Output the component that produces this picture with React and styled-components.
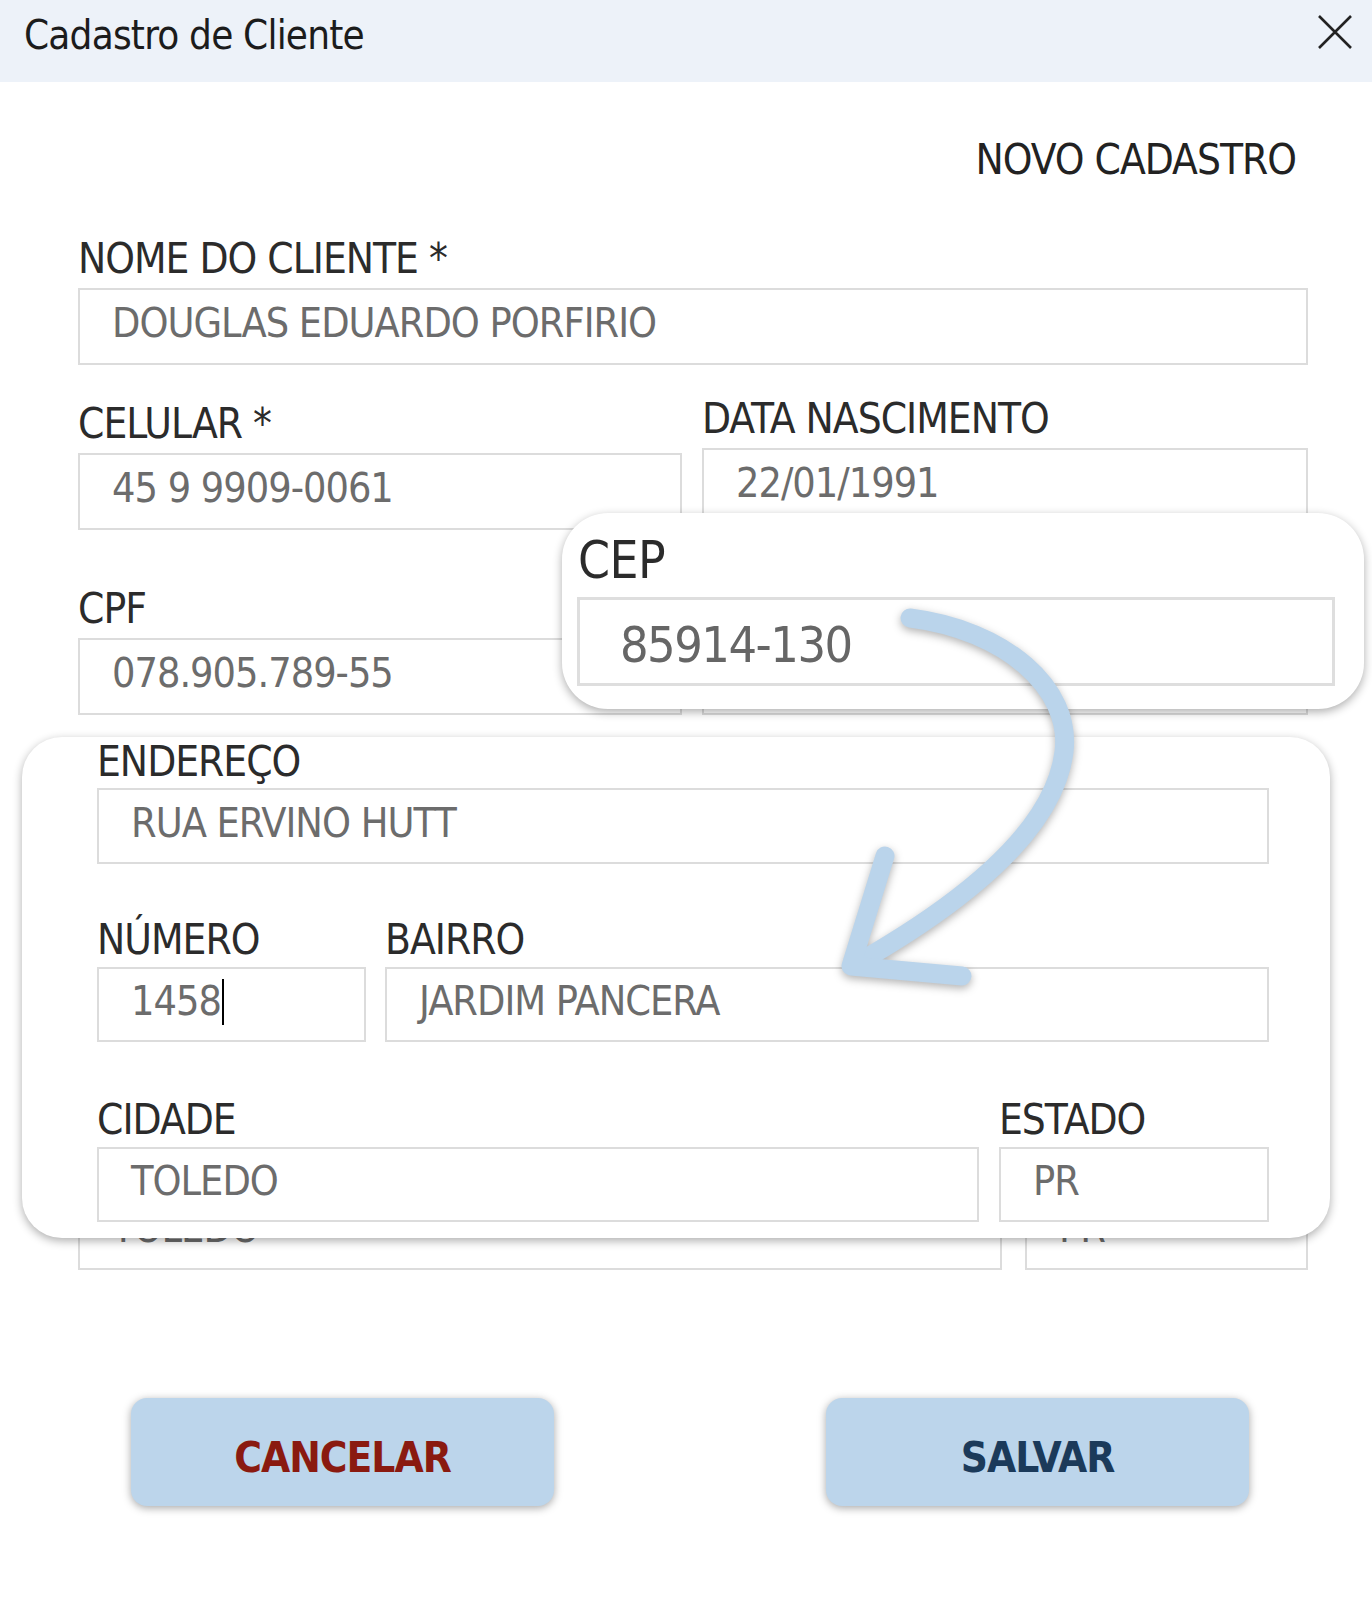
import React from "react";
import styled, { createGlobalStyle } from "styled-components";

const NARROW = `"DejaVu Sans Condensed", "DejaVu Sans", sans-serif`;

const Global = createGlobalStyle`
  html, body { margin: 0; padding: 0; background: #ffffff; }
  body { font-family: ${NARROW}; }
  * { box-sizing: border-box; }
`;

const Window = styled.div`
  position: relative;
  width: 1372px;
  height: 1601px;
  overflow: hidden;
  background: #ffffff;
`;

const TitleBar = styled.header`
  display: flex;
  justify-content: space-between;
  align-items: flex-start;
  height: 82px;
  padding: 15px 19px 0 24px;
  background: #edf2f9;
`;

const Title = styled.h1`
  margin: 0;
  font-weight: 400;
  font-size: 40px;
  letter-spacing: -0.8px;
  line-height: 1;
  color: #1c1c1c;
`;

const CloseIcon = styled.svg`
  margin-top: 0;
  width: 36px;
  height: 34px;
`;

const Body = styled.main`
  padding: 0 64px 0 78px;
`;

const Mode = styled.div`
  margin-top: 56px;
  padding-right: 12px;
  text-align: right;
  font-size: 42px;
  letter-spacing: -1px;
  line-height: 44px;
  height: 44px;
  color: #222;
`;

const Row = styled.div`
  display: grid;
  grid-template-columns: ${(p) => p.$cols || "1fr"};
  column-gap: ${(p) => p.$gap ?? 20}px;
  margin-top: ${(p) => p.$top ?? 0}px;
  align-items: start;
`;

const Field = styled.div`
  display: flex;
  flex-direction: column;
  gap: ${(p) => p.$gap ?? 8}px;
  margin-top: ${(p) => p.$shift ?? 0}px;
`;

const Label = styled.label`
  display: block;
  height: 45px;
  font-size: 42px;
  letter-spacing: -1px;
  line-height: 47px;
  color: #2b2b2b;
  white-space: nowrap;
  visibility: ${(p) => (p.$covered ? "hidden" : "visible")};
`;

const Input = styled.div`
  display: flex;
  align-items: center;
  height: ${(p) => p.$h ?? 77}px;
  padding: 0 0 6px 32px;
  border: 2px solid #dcdcdc;
  background: #fff;
  font-size: 41px;
  letter-spacing: -1px;
  line-height: 1;
  color: #6c6c6c;
  white-space: nowrap;
  overflow: hidden;
`;

const Value = styled.span`
  visibility: ${(p) => (p.$covered ? "hidden" : "visible")};
`;

const Caret = styled.span`
  display: inline-block;
  width: 2px;
  height: 46px;
  margin-left: 1px;
  background: #000;
`;

const Buttons = styled.div`
  display: flex;
  justify-content: space-between;
  margin-top: 128px;
  padding: 0 59px 0 53px;
`;

const Button = styled.button`
  width: 423px;
  height: 108px;
  border: none;
  border-radius: 16px;
  background: #bcd5eb;
  box-shadow: 0 2px 8px rgba(0, 0, 0, 0.35);
  font-family: ${NARROW};
  font-weight: 700;
  font-size: 42px;
  letter-spacing: -1px;
  color: ${(p) => p.$color};
  padding: 10px 0 0;
`;

const CepCard = styled.section`
  position: absolute;
  left: 562px;
  top: 513px;
  width: 802px;
  height: 196px;
  padding: 21px 29px 0 15px;
  background: #fff;
  border-radius: 46px;
  box-shadow: 0 3px 10px rgba(0, 0, 0, 0.32);
`;

const BigLabel = styled.div`
  height: 52px;
  margin: 0 0 11px 1px;
  font-size: 51px;
  letter-spacing: -0.5px;
  line-height: 54px;
  color: #2b2b2b;
`;

const BigInput = styled.div`
  display: flex;
  align-items: center;
  height: 89px;
  padding: 7px 0 0 40px;
  border: 3px solid #dedede;
  font-size: 50px;
  letter-spacing: -1.5px;
  color: #666;
`;

const AddressCard = styled.section`
  position: absolute;
  left: 22px;
  top: 737px;
  width: 1308px;
  height: 501px;
  padding: 1px 61px 16px 75px;
  background: #fff;
  border-radius: 40px;
  box-shadow: 0 3px 10px rgba(0, 0, 0, 0.32);
`;

const ArrowLayer = styled.svg`
  position: absolute;
  left: 0;
  top: 0;
  width: 1372px;
  height: 1601px;
  pointer-events: none;
  filter: drop-shadow(0 3px 4px rgba(0, 0, 0, 0.3));
`;

function F({ label, value, shift, gap, h, covered, children }) {
  return (
    <Field $shift={shift} $gap={gap}>
      <Label $covered={covered}>{label}</Label>
      <Input $h={h}>
        <Value $covered={covered}>{value}</Value>
        {children}
      </Input>
    </Field>
  );
}

export default function App() {
  return (
    <Window>
      <Global />
      <TitleBar>
        <Title>Cadastro de Cliente</Title>
        <CloseIcon viewBox="0 0 36 34">
          <path d="M2 1 L34 33 M34 1 L2 33" stroke="#222" strokeWidth="2.6" fill="none" />
        </CloseIcon>
      </TitleBar>

      <Body>
        <Mode>NOVO CADASTRO</Mode>

        <Row $top={53}>
          <F label="NOME DO CLIENTE *" value="DOUGLAS EDUARDO PORFIRIO" />
        </Row>

        <Row $top={30} $cols="604px 606px">
          <F label="CELULAR *" value="45 9 9909-0061" shift={5} />
          <F label="DATA NASCIMENTO" value="22/01/1991" />
        </Row>

        <Row $top={55} $cols="604px 606px">
          <F label="CPF" value="078.905.789-55" />
          <F label="CEP" value="85914-130" covered />
        </Row>

        <Row $top={55}>
          <F label="ENDEREÇO" value="RUA ERVINO HUTT" covered />
        </Row>

        <Row $top={55} $cols="272px 938px">
          <F label="NÚMERO" value="1458" covered />
          <F label="BAIRRO" value="JARDIM PANCERA" covered />
        </Row>

        <Row $top={55} $cols="924px 283px" $gap={23}>
          <F label="CIDADE" value="TOLEDO" />
          <F label="ESTADO" value="PR" />
        </Row>

        <Buttons>
          <Button $color="#8a1a10">CANCELAR</Button>
          <Button $color="#1b3a5a">SALVAR</Button>
        </Buttons>
      </Body>

      <CepCard>
        <BigLabel>CEP</BigLabel>
        <BigInput>85914-130</BigInput>
      </CepCard>

      <AddressCard>
        <Row>
          <F label="ENDEREÇO" value="RUA ERVINO HUTT" gap={5} h={76} />
        </Row>
        <Row $top={52} $cols="269px 884px" $gap={19}>
          <F label="NÚMERO" value="1458" gap={6} h={75}>
            <Caret />
          </F>
          <F label="BAIRRO" value="JARDIM PANCERA" gap={6} h={75} />
        </Row>
        <Row $top={54} $cols="882px 270px" $gap={20}>
          <F label="CIDADE" value="TOLEDO" gap={6} h={75} />
          <F label="ESTADO" value="PR" gap={6} h={75} />
        </Row>
      </AddressCard>

      <ArrowLayer viewBox="0 0 1372 1601">
        <g fill="none" stroke="#bad4eb" strokeWidth="19" strokeLinecap="round" strokeLinejoin="round">
          <path d="M910 618 C 1005 630, 1072 688, 1064 752 C 1054 832, 960 905, 856 964" />
          <path d="M885 856 L851 966 L962 976" />
        </g>
      </ArrowLayer>
    </Window>
  );
}
